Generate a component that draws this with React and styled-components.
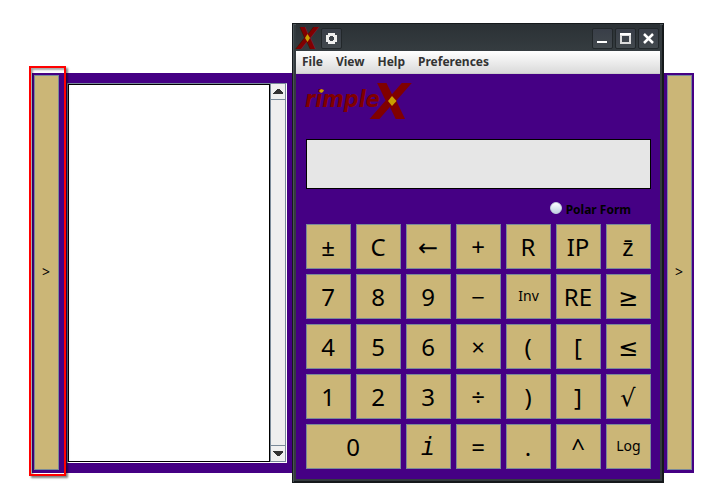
import React from "react";
import styled, { createGlobalStyle } from "styled-components";

const purple = "#450084";
const gold = "#cbb677";
const edge = "#7a8a99";

const GlobalStyle = createGlobalStyle`
  * { box-sizing: border-box; }
  body { margin: 0; background: #fff; font-family: "Noto Sans", "DejaVu Sans", sans-serif; color: #000; }
  button, input { font: inherit; color: inherit; }
`;

const Desktop = styled.main`
  display: grid;
  grid-template-columns: minmax(0, 260fr) minmax(0, 372fr) 30px;
  padding: 23px 16px 12px 32px;
`;

const SidePanel = styled.section`
  position: relative;
  display: flex;
  gap: 8px;
  margin: 50px 0 10px;
  padding: ${(p) => (p.$right ? "2px 2px 3px 3px" : "2px 5px 3px 2px")};
  background: ${purple};
`;

const Toggle = styled.button`
  width: 25px;
  padding: 0 1px 2px 0;
  border: 1px solid ${edge};
  background: ${gold};
  font-size: 14px;
`;

const Highlight = styled.div`
  position: absolute;
  inset: -7px auto -3px -3px;
  width: 37px;
  border: 2px solid #ff0000;
  box-shadow: 2px 2px 2px rgba(0, 0, 0, 0.5), inset 2px 2px 2px rgba(0, 0, 0, 0.35);
  pointer-events: none;
`;

const ScrollPane = styled.div`
  flex: 1;
  display: flex;
  margin: 8px 0 7px;
  border: 1px solid ${edge};
  border-right-color: #fff;
  border-bottom-color: #fff;
`;

const History = styled.textarea`
  flex: 1;
  min-width: 0;
  resize: none;
  border: 1px solid #000;
  outline: none;
  background: #fff;
  overflow: hidden;
`;

const ScrollBar = styled.div`
  display: flex;
  flex-direction: column;
  justify-content: space-between;
  width: 16px;
  background: #eee;
  border: solid ${edge};
  border-width: 0 1px 1px;
`;

const ScrollButton = styled.button`
  height: 16px;
  padding: 0;
  border: solid ${edge};
  border-width: ${(p) => (p.$down ? "1px 0 0" : "0 0 1px")};
  background: #f0f0f0;
  display: grid;
  place-items: center;
`;

const Window = styled.section`
  border: 1px solid #15191c;
  background: #343b3f;
  padding: 0 3px 3px;
  box-shadow: inset 1px 1px #4b5357, inset -1px -1px #15191c;
`;

const TitleBar = styled.header`
  display: flex;
  align-items: center;
  gap: 2px;
  height: 27px;
  padding: 1px 1px 0 1px;
  background: linear-gradient(#2b3135, #353c40);
`;

const TitleIcon = styled.svg`
  width: 22px;
  height: 24px;
  overflow: visible;
`;

const TitleButton = styled.button`
  display: grid;
  place-items: center;
  width: 21px;
  height: 21px;
  padding: 0;
  border: 1px solid #22272a;
  border-radius: 2px;
  background: linear-gradient(#393e48, #42494e);
`;

const Spacer = styled.div`
  flex: 1;
`;

const MenuBar = styled.nav`
  display: flex;
  gap: 13px;
  height: 23px;
  padding: 0 6px;
  border-bottom: 1px solid #ccc;
  background: linear-gradient(#fff, #dadada);
`;

const MenuItem = styled.button`
  padding: 0;
  border: 0;
  background: none;
  color: #333;
  font-size: 12px;
  font-weight: 700;
  line-height: 20px;
`;

const Calculator = styled.div`
  padding: 9px 9px 10px 10px;
  background: ${purple};
`;

const Brand = styled.svg`
  display: block;
  width: 112px;
  height: 42px;
  overflow: visible;
`;

const LogoText = styled.text`
  font-family: ${(p) => (p.$narrow ? '"DejaVu Sans Condensed", ' : "")}"DejaVu Sans", sans-serif;
  font-weight: 700;
  font-style: italic;
  font-size: ${(p) => p.$size}px;
  fill: #800000;
`;

const Display = styled.input`
  display: block;
  width: 100%;
  height: 50px;
  margin-top: 14px;
  padding: 4px;
  border: 1px solid #000;
  background: #e6e6e6;
  outline: none;
  font-size: 20px;
`;

const PolarLabel = styled.label`
  display: flex;
  align-items: center;
  justify-content: flex-end;
  gap: 4px;
  height: 35px;
  padding: 5px 20px 0 0;
  font-size: 12px;
  font-weight: 700;
`;

const Radio = styled.input`
  appearance: none;
  width: 12px;
  height: 12px;
  margin: 0 0 2px;
  border: 1px solid #c4d3df;
  border-radius: 50%;
  background: linear-gradient(#fff, #bfd2e4);
`;

const Keypad = styled.div`
  display: grid;
  grid-template-columns: repeat(7, minmax(0, 1fr));
  grid-auto-rows: 45px;
  gap: 5px;
`;

const Key = styled.button`
  grid-column: span ${(p) => (p.$wide ? 2 : 1)};
  padding: ${(p) => (p.$small ? "0 0 2px" : "0 1px 0 0")};
  border: 1px solid ${edge};
  background: ${gold};
  font-family: ${(p) => (p.$mono ? '"DejaVu Sans Mono", monospace' : '"Noto Sans", "DejaVu Sans", sans-serif')};
  font-style: ${(p) => (p.$mono ? "italic" : "normal")};
  font-size: ${(p) => (p.$small ? "14px" : "24px")};
  line-height: 32px;
`;

const keys = [
  "±", "C", "←", "+", "R", "IP", "z̄",
  "7", "8", "9", "−", "Inv", "RE", "≥",
  "4", "5", "6", "×", "(", "[", "≤",
  "1", "2", "3", "÷", ")", "]", "√",
  "0", "i", "=", ".", "^", "Log",
];

function Arrow({ down }) {
  return (
    <svg width="10" height="6" viewBox="0 0 10 6" shapeRendering="crispEdges" aria-hidden="true">
      <path d={down ? "M0 0h10v1L6 5H4L0 1z" : "M4 0h2l4 4v1H0V4z"} fill="#333" />
    </svg>
  );
}

export default function App() {
  return (
    <>
      <GlobalStyle />
      <Desktop>
        <SidePanel>
          <Toggle aria-label="Toggle history">&gt;</Toggle>
          <ScrollPane>
            <History aria-label="History" readOnly />
            <ScrollBar>
              <ScrollButton aria-label="Scroll up"><Arrow /></ScrollButton>
              <ScrollButton $down aria-label="Scroll down"><Arrow down /></ScrollButton>
            </ScrollBar>
          </ScrollPane>
          <Highlight />
        </SidePanel>

        <Window>
          <TitleBar>
            <TitleIcon viewBox="0 0 22 24" aria-hidden="true">
              <LogoText $narrow $size={30} x="0" y="23">X</LogoText>
              <path d="M10.500 8l2.500 4-2.500 4L8 12z" fill="#c9a000" />
            </TitleIcon>
            <TitleButton aria-label="Window menu">
              <svg width="11" height="11" viewBox="0 0 11 11">
                <path d="M2 0h7v2h2v7H9v2H2V9H0V2h2zM4 3v1H3v3h1v1h3V7h1V4H7V3z" fill="#eee" fillRule="evenodd" />
              </svg>
            </TitleButton>
            <Spacer />
            <TitleButton aria-label="Minimize">
              <svg width="11" height="11" viewBox="0 0 11 11"><path d="M0 8h10v2H0z" fill="#fff" /></svg>
            </TitleButton>
            <TitleButton aria-label="Maximize">
              <svg width="11" height="11" viewBox="0 0 11 11">
                <path d="M0 0h11v11H0zM2 3v6h7V3z" fill="#ddd" fillRule="evenodd" />
                <path d="M0 0h11v2H0z" fill="#fff" />
              </svg>
            </TitleButton>
            <TitleButton aria-label="Close">
              <svg width="11" height="11" viewBox="0 0 11 11">
                <path d="M1 1l9 9M10 1l-9 9" stroke="#fff" strokeWidth="2.500" />
              </svg>
            </TitleButton>
          </TitleBar>
          <MenuBar>
            {["File", "View", "Help", "Preferences"].map((m) => <MenuItem key={m}>{m}</MenuItem>)}
          </MenuBar>
          <Calculator>
            <Brand viewBox="0 0 112 42" role="img" aria-label="rimpleX">
              <LogoText $narrow $size={23} x="-1" y="24">rimple</LogoText>
              <LogoText $size={49} x="66" y="36">X</LogoText>
              <path d="M86 13l4.500 5-4.500 5-4-5z" fill="#c9a000" />
              <path d="M15 6l3 1-1 2-2 1-2-2z" fill="#c9a000" />
            </Brand>
            <Display aria-label="Display" readOnly />
            <PolarLabel>
              <Radio type="radio" name="form" />
              Polar Form
            </PolarLabel>
            <Keypad>
              {keys.map((k) => (
                <Key key={k} $wide={k === "0"} $mono={k === "i"} $small={k === "Inv" || k === "Log"}>{k}</Key>
              ))}
            </Keypad>
          </Calculator>
        </Window>

        <SidePanel $right>
          <Toggle aria-label="Toggle side panel">&gt;</Toggle>
        </SidePanel>
      </Desktop>
    </>
  );
}
